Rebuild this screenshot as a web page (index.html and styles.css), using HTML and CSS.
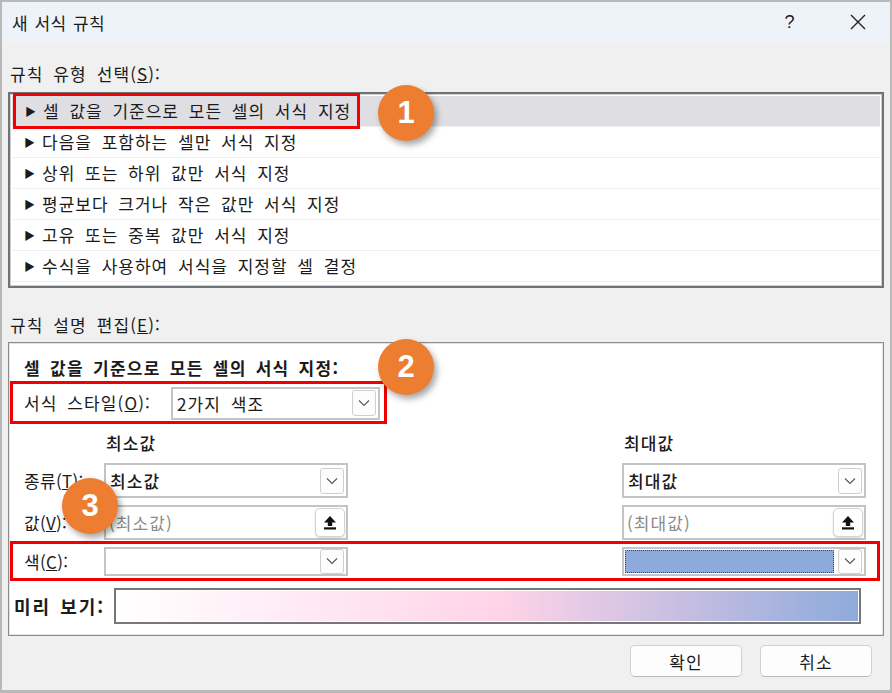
FILE: index.html
```html
<!DOCTYPE html>
<html lang="ko">
<head>
  <meta charset="UTF-8" />
  <title>새 서식 규칙</title>
  <link rel="stylesheet" href="styles.css">
</head>
<body>
  <div class="dialog">
    <div class="titlebar">
      <span class="title">새 서식 규칙</span>
      <span class="help">?</span>
      <span class="close">
        <svg width="16" height="16" viewBox="0 0 16 16"><path d="M1 1 L15 15 M15 1 L1 15" stroke="#222" stroke-width="1.4" fill="none"/></svg>
      </span>
    </div>

    <div class="content">
      <div class="group-label">규칙 유형 선택(<u>S</u>):</div>
      <div class="rule-list">
        <div class="rule selected"><span class="hl-box"><span class="arrow">▶</span>셀 값을 기준으로 모든 셀의 서식 지정</span></div>
        <div class="rule"><span class="arrow">▶</span>다음을 포함하는 셀만 서식 지정</div>
        <div class="rule"><span class="arrow">▶</span>상위 또는 하위 값만 서식 지정</div>
        <div class="rule"><span class="arrow">▶</span>평균보다 크거나 작은 값만 서식 지정</div>
        <div class="rule"><span class="arrow">▶</span>고유 또는 중복 값만 서식 지정</div>
        <div class="rule"><span class="arrow">▶</span>수식을 사용하여 서식을 지정할 셀 결정</div>
      </div>

      <div class="group-label second">규칙 설명 편집(<u>E</u>):</div>
      <div class="desc">
        <div class="desc-head">셀 값을 기준으로 모든 셀의 서식 지정:</div>

        <div class="style-row">
          <span class="style-lbl">서식 스타일(<u>O</u>):</span>
          <div class="combo style-combo">
            <span class="combo-text">2가지 색조</span>
            <span class="drop"><svg width="12" height="8" viewBox="0 0 12 8"><path d="M1 1.5 L6 6.5 L11 1.5" stroke="#555" stroke-width="1.1" fill="none"/></svg></span>
          </div>
        </div>

        <div class="row heads">
          <span class="lbl"></span>
          <span class="col">최소값</span>
          <span class="spacer"></span>
          <span class="col">최대값</span>
        </div>

        <div class="row field-row">
          <span class="lbl">종류(<u>T</u>):</span>
          <div class="col combo">
            <span class="combo-text strong">최소값</span>
            <span class="drop"><svg width="12" height="8" viewBox="0 0 12 8"><path d="M1 1.5 L6 6.5 L11 1.5" stroke="#555" stroke-width="1.1" fill="none"/></svg></span>
          </div>
          <span class="spacer"></span>
          <div class="col combo">
            <span class="combo-text strong">최대값</span>
            <span class="drop"><svg width="12" height="8" viewBox="0 0 12 8"><path d="M1 1.5 L6 6.5 L11 1.5" stroke="#555" stroke-width="1.1" fill="none"/></svg></span>
          </div>
        </div>

        <div class="row field-row">
          <span class="lbl">값(<u>V</u>):</span>
          <div class="col textbox">
            <span class="placeholder">(최소값)</span>
            <span class="pick"><svg width="14" height="15" viewBox="0 0 14 15"><path d="M7 1 L13 7.5 L9.2 7.5 L9.2 11 L4.8 11 L4.8 7.5 L1 7.5 Z" fill="#111"/><rect x="1" y="12.3" width="12" height="2.2" fill="#111"/></svg></span>
          </div>
          <span class="spacer"></span>
          <div class="col textbox">
            <span class="placeholder">(최대값)</span>
            <span class="pick"><svg width="14" height="15" viewBox="0 0 14 15"><path d="M7 1 L13 7.5 L9.2 7.5 L9.2 11 L4.8 11 L4.8 7.5 L1 7.5 Z" fill="#111"/><rect x="1" y="12.3" width="12" height="2.2" fill="#111"/></svg></span>
          </div>
        </div>

        <div class="row color-row">
          <span class="lbl">색(<u>C</u>):</span>
          <div class="col combo color-combo">
            <span class="swatch"></span>
            <span class="drop"><svg width="12" height="8" viewBox="0 0 12 8"><path d="M1 1.5 L6 6.5 L11 1.5" stroke="#555" stroke-width="1.1" fill="none"/></svg></span>
          </div>
          <span class="spacer"></span>
          <div class="col combo color-combo">
            <span class="swatch blue"></span>
            <span class="drop"><svg width="12" height="8" viewBox="0 0 12 8"><path d="M1 1.5 L6 6.5 L11 1.5" stroke="#555" stroke-width="1.1" fill="none"/></svg></span>
          </div>
        </div>

        <div class="preview-row">
          <span class="preview-lbl">미리 보기:</span>
          <div class="preview"></div>
        </div>
      </div>

      <div class="buttons">
        <button class="btn">확인</button>
        <button class="btn">취소</button>
      </div>
    </div>

    <!-- numbered callouts -->
    <span class="badge b1">1</span>
    <span class="badge b2">2</span>
    <span class="badge b3">3</span>
  </div>
</body>
</html>
```

FILE: styles.css
```css
body {
  margin: 0;
  padding: 0;
  background: #f0f0f0;
  font-family: "Noto Sans CJK KR", "Noto Sans", sans-serif;
  font-size: 17px;
  letter-spacing: 1.1px;
  word-spacing: 4px;
  color: #1b1b1b;
}
.dialog {
  position: relative;
  width: 892px;
  height: 693px;
  box-sizing: border-box;
  border: 2px solid #b9b9b9;
  border-bottom-width: 3px;
  background: #f0f0f0;
  overflow: hidden;
}
.titlebar {
  height: 40px;
  background: #eef2f9;
  display: flex;
  align-items: center;
  padding-left: 10px;
  font-size: 17px;
}
.title {
  flex: 1;
  letter-spacing: 0.5px;
  word-spacing: 1px;
}
.help {
  width: 40px;
  font-family: "Liberation Sans", Arial, sans-serif;
  font-size: 18px;
  margin-right: 28px;
  text-align: center;
}
.close {
  width: 40px;
  margin-right: 12px;
  display: flex;
  justify-content: center;
}
.content {
  padding: 0 6px;
}
.group-label {
  margin-top: 22px;
  height: 20px;
  line-height: 20px;
  margin-left: 2px;
  margin-bottom: 8px;
}
.group-label.second {
  margin-top: 27px;
  margin-bottom: 7px;
}
.rule-list {
  height: 196px;
  box-sizing: border-box;
  background: #fff;
  border: 2px solid #6f7378;
  box-shadow: inset 0 0 0 1px #d2d2d2;
  padding: 2px 2px;
}
.rule {
  height: 30px;
  line-height: 30px;
  border-bottom: 1px solid #f0f0f0;
  padding-left: 12px;
  font-size: 17px;
  letter-spacing: 1px;
  word-spacing: 4px;
}
.arrow {
  display: inline-block;
  width: 18px;
  font-size: 11px;
  vertical-align: top;
  letter-spacing: 0;
}
.rule.selected {
  background: #dedee3;
  padding-left: 0;
}
.hl-box {
  display: inline-block;
  height: 30px;
  line-height: 30px;
  padding: 0 6px 0 9px;
  border: 3px solid #f00000;
  margin-left: 1px;
  margin-top: -3px;
  vertical-align: top;
}
.desc {
  height: 294px;
  box-sizing: border-box;
  background: #fff;
  border: 1px solid #8c8c8c;
  box-shadow: inset 0 0 0 1px #e2e2e2;
}
.desc-head {
  margin-top: 15px;
  margin-left: 15px;
  height: 20px;
  line-height: 20px;
  font-weight: bold;
  letter-spacing: 1.3px;
  word-spacing: 3px;
}
.style-row {
  margin: 3px 0 0 1px;
  width: 377px;
  height: 43px;
  box-sizing: border-box;
  border: 3px solid #f00000;
  display: flex;
  align-items: center;
  padding-left: 11px;
}
.style-lbl {
  width: 147px;
}
.combo, .textbox {
  position: relative;
  background: #fff;
  border: 2px solid #c4c4c4;
  box-sizing: border-box;
  display: flex;
  align-items: center;
}
.style-combo {
  width: 209px;
  height: 33px;
  margin-top: 1px;
}
.combo-text {
  flex: 1;
  padding-left: 4px;
  font-size: 17px;
}
.combo-text.strong {
  font-weight: 500;
}
.drop {
  width: 24px;
  height: 26px;
  margin-right: 2px;
  box-sizing: border-box;
  border: 1px solid #cfcfcf;
  border-radius: 3px;
  background: #fdfdfd;
  display: flex;
  align-items: center;
  justify-content: center;
}
.row {
  display: flex;
  align-items: center;
  padding: 0 17px 0 15px;
}
.row .lbl {
  width: 80px;
  flex-shrink: 0;
  letter-spacing: 0.3px;
  white-space: nowrap;
}
.row .col {
  width: 244px;
  flex-shrink: 0;
}
.row .spacer {
  flex: 1;
}
.heads {
  margin-top: 9px;
  height: 20px;
  line-height: 20px;
  font-weight: 500;
}
.heads .col {
  padding-left: 2px;
  box-sizing: border-box;
}
.field-row {
  height: 35px;
  margin-top: 10px;
}
.field-row + .field-row {
  margin-top: 7px;
}
.field-row .col {
  height: 35px;
}
.placeholder {
  flex: 1;
  padding-left: 3px;
  color: #8a8a8a;
  font-size: 17px;
}
.pick {
  width: 30px;
  height: 29px;
  margin-right: 1px;
  box-sizing: border-box;
  border: 1px solid #d4d4d4;
  border-radius: 5px;
  background: #fff;
  box-shadow: 0 1px 2px rgba(0,0,0,0.15);
  display: flex;
  align-items: center;
  justify-content: center;
}
.color-row {
  margin: 1px 3px 0 1px;
  height: 40px;
  box-sizing: border-box;
  border: 3px solid #f00000;
  padding: 0 11px 0 11px;
}
.color-combo {
  height: 29px;
}
.color-combo .drop {
  height: 25px;
}
.swatch {
  flex: 1;
  height: 23px;
  margin: 0 4px 0 1px;
  box-sizing: border-box;
}
.swatch.blue {
  background: #8eaadb;
  border: 1px dotted #444;
}
.preview-row {
  display: flex;
  align-items: center;
  margin-top: 7px;
  height: 36px;
  padding-left: 5px;
}
.preview-lbl {
  width: 100px;
  font-weight: bold;
  font-size: 18px;
  letter-spacing: 2px;
  word-spacing: 2px;
}
.preview {
  width: 747px;
  height: 36px;
  box-sizing: border-box;
  border: 2px solid #777;
  box-shadow: inset 0 0 0 1px #fff;
  background: linear-gradient(to right, #ffffff, #ffd3e8 52%, #8eaadb);
}
.buttons {
  display: flex;
  justify-content: flex-end;
  gap: 18px;
  margin-top: 9px;
  padding-right: 12px;
}
.btn {
  width: 112px;
  height: 32px;
  background: #fdfdfd;
  border: 1px solid #d0d0d0;
  border-bottom-color: #b8b8b8;
  border-radius: 5px;
  font-family: "Noto Sans CJK KR", sans-serif;
  font-size: 17px;
  letter-spacing: 1px;
  color: #1b1b1b;
}
.badge {
  position: absolute;
  width: 56px;
  height: 56px;
  border-radius: 50%;
  background: #ed7d31;
  color: #fff;
  font-family: "Liberation Sans", Arial, sans-serif;
  font-weight: bold;
  font-size: 31px;
  line-height: 56px;
  text-align: center;
  letter-spacing: 0;
  box-shadow: 3px 4px 6px rgba(0,0,0,0.35);
}
.b1 { left: 376px; top: 83px; }
.b2 { left: 376px; top: 337px; }
.b3 { left: 60px; top: 476px; }
```
